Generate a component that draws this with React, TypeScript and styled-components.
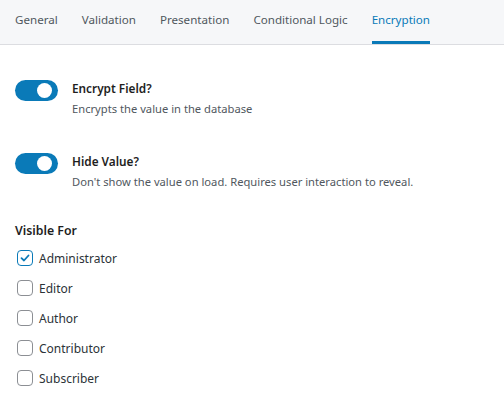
import React from "react";
import styled, { createGlobalStyle } from "styled-components";

const GlobalStyle = createGlobalStyle`
  body {
    margin: 0;
    background: #ffffff;
    font-family: "Noto Sans", "Open Sans", sans-serif;
  }
`;

const TabBar = styled.div`
  display: flex;
  gap: 24px;
  height: 44px;
  padding-left: 15px;
  background: #f6f7f9;
  border-bottom: 1px solid #dcdde1;
`;

const Tab = styled.div<{ active?: boolean }>`
  display: flex;
  align-items: flex-start;
  padding-top: 11px;
  box-sizing: border-box;
  font-size: 11.6px;
  line-height: 18px;
  color: ${(p) => (p.active ? "#0a7ab8" : "#50575e")};
  border-bottom: 3px solid ${(p) => (p.active ? "#0a7ab8" : "transparent")};
`;

const Content = styled.div`
  padding: 35px 15px 0;
`;

const ToggleList = styled.div`
  display: flex;
  flex-direction: column;
  gap: 34px;
  margin-bottom: 29px;
`;

const ToggleRow = styled.div`
  display: flex;
  gap: 14px;
`;

const Toggle = styled.div<{ on?: boolean }>`
  position: relative;
  flex: none;
  width: 43px;
  height: 21px;
  border-radius: 11px;
  background: ${(p) => (p.on ? "#0a7ab8" : "#c3c4c7")};
  &::after {
    content: "";
    position: absolute;
    top: 3px;
    left: ${(p) => (p.on ? "22px" : "3px")};
    width: 15px;
    height: 15px;
    border-radius: 50%;
    background: #ffffff;
  }
`;

const ToggleText = styled.div`
  display: flex;
  flex-direction: column;
  margin-top: -2px;
`;

const Title = styled.div`
  font-size: 11.8px;
  font-weight: 600;
  line-height: 20px;
  color: #1e1e1e;
`;

const Desc = styled.div`
  font-size: 11.2px;
  line-height: 21px;
  color: #50575e;
`;

const Heading = styled.div`
  font-size: 12.3px;
  font-weight: 600;
  line-height: 20px;
  color: #1e1e1e;
  margin-bottom: 2px;
`;

const CheckList = styled.div`
  display: flex;
  flex-direction: column;
`;

const CheckRow = styled.label`
  display: flex;
  align-items: center;
  gap: 6px;
  height: 30px;
  padding-left: 2px;
  font-size: 12px;
  color: #2c3338;
`;

const Box = styled.span<{ checked?: boolean }>`
  display: flex;
  align-items: center;
  justify-content: center;
  box-sizing: border-box;
  width: 16px;
  height: 16px;
  border-radius: 4px;
  border: 1px solid ${(p) => (p.checked ? "#0a7ab8" : "#8c8f94")};
  background: #ffffff;
`;

const roles = [
  { name: "Administrator", checked: true },
  { name: "Editor", checked: false },
  { name: "Author", checked: false },
  { name: "Contributor", checked: false },
  { name: "Subscriber", checked: false },
];

export default function App() {
  return (
    <>
      <GlobalStyle />
      <TabBar>
        <Tab>General</Tab>
        <Tab>Validation</Tab>
        <Tab>Presentation</Tab>
        <Tab>Conditional Logic</Tab>
        <Tab active>Encryption</Tab>
      </TabBar>
      <Content>
        <ToggleList>
          <ToggleRow>
            <Toggle on />
            <ToggleText>
              <Title>Encrypt Field?</Title>
              <Desc>Encrypts the value in the database</Desc>
            </ToggleText>
          </ToggleRow>
          <ToggleRow>
            <Toggle on />
            <ToggleText>
              <Title>Hide Value?</Title>
              <Desc>Don't show the value on load. Requires user interaction to reveal.</Desc>
            </ToggleText>
          </ToggleRow>
        </ToggleList>
        <Heading>Visible For</Heading>
        <CheckList>
          {roles.map((r) => (
            <CheckRow key={r.name}>
              <Box checked={r.checked}>
                {r.checked && (
                  <svg width="12" height="12" viewBox="0 0 12 12">
                    <path d="M2.5 6.2 L5 8.5 L9.5 3.5" fill="none" stroke="#0a7ab8" strokeWidth="1.8" strokeLinecap="round" strokeLinejoin="round" />
                  </svg>
                )}
              </Box>
              {r.name}
            </CheckRow>
          ))}
        </CheckList>
      </Content>
    </>
  );
}
